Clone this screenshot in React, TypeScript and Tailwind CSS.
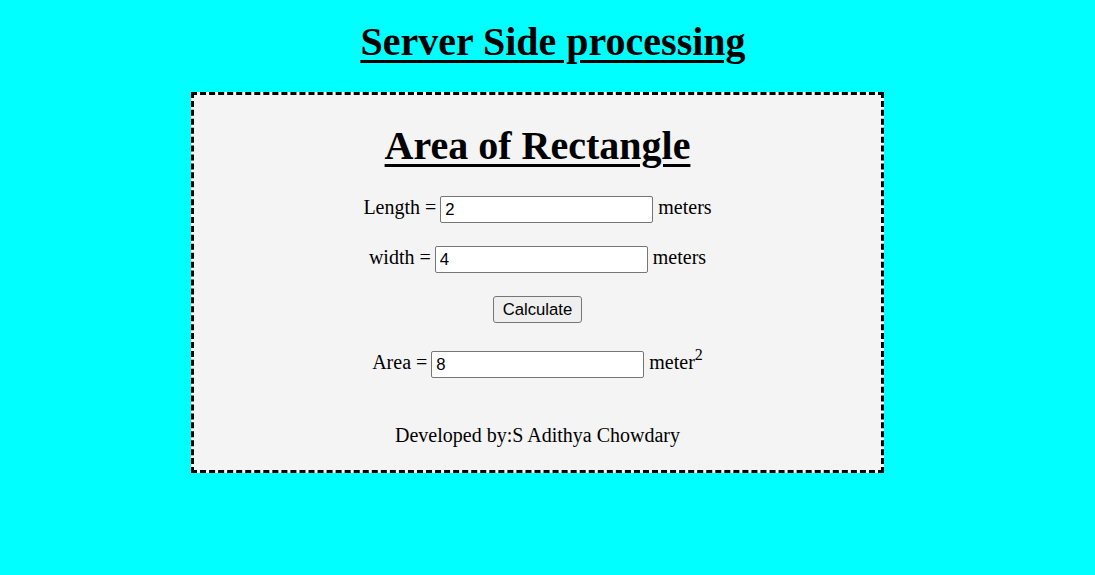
import React from "react";

const serif = "font-['Liberation_Serif','Times_New_Roman',serif]";
const sans = "font-['Liberation_Sans',Arial,sans-serif]";

interface FieldRowProps {
  label: string;
  value: string;
  unit: React.ReactNode;
  className?: string;
}

const FieldRow: React.FC<FieldRowProps> = ({ label, value, unit, className }) => {
  return (
    <div className={`flex h-[27px] items-start justify-center text-[20px] leading-[23px] ${className ?? ""}`}>
      <span className="mr-[4px]">{label}</span>
      <input
        type="text"
        defaultValue={value}
        className={`${sans} h-[27px] w-[213px] rounded-[2px] border border-[#767676] bg-white pl-[4px] text-[16.7px] text-black outline-none`}
      />
      <span className="ml-[5px]">{unit}</span>
    </div>
  );
};

export default function App() {
  return (
    <div className={`${serif} min-h-screen bg-[#00ffff] pt-[19px] text-black`}>
      <h1 className="h-[46px] pl-[11px] text-center text-[40px] font-bold leading-[46px] underline decoration-[3px] underline-offset-[5px]">
        Server Side processing
      </h1>
      <div className="ml-[191px] mt-[27px] w-[693px] border-[3px] border-dashed border-black bg-[#f4f4f4] pb-[23px]">
        <h2 className="mt-[28px] h-[46px] text-center text-[40px] font-bold leading-[46px] underline decoration-[3px] underline-offset-[5px]">
          Area of Rectangle
        </h2>
        <FieldRow label="Length =" value="2" unit="meters" className="mt-[27px]" />
        <FieldRow label="width =" value="4" unit="meters" className="mt-[23px]" />
        <div className="mt-[23px] flex h-[27px] justify-center">
          <button
            type="button"
            className={`${sans} h-[27px] w-[89px] rounded-[3px] border border-[#767676] bg-[#efefef] text-[16.7px] text-black`}
          >
            Calculate
          </button>
        </div>
        <FieldRow
          label="Area ="
          value="8"
          unit={
            <>
              meter<sup className="relative -top-[9px] align-baseline text-[16px]">2</sup>
            </>
          }
          className="mt-[28px]"
        />
        <p className="mt-[46px] h-[23px] text-center text-[20px] leading-[23px]">
          Developed by:S Adithya Chowdary
        </p>
      </div>
    </div>
  );
}
